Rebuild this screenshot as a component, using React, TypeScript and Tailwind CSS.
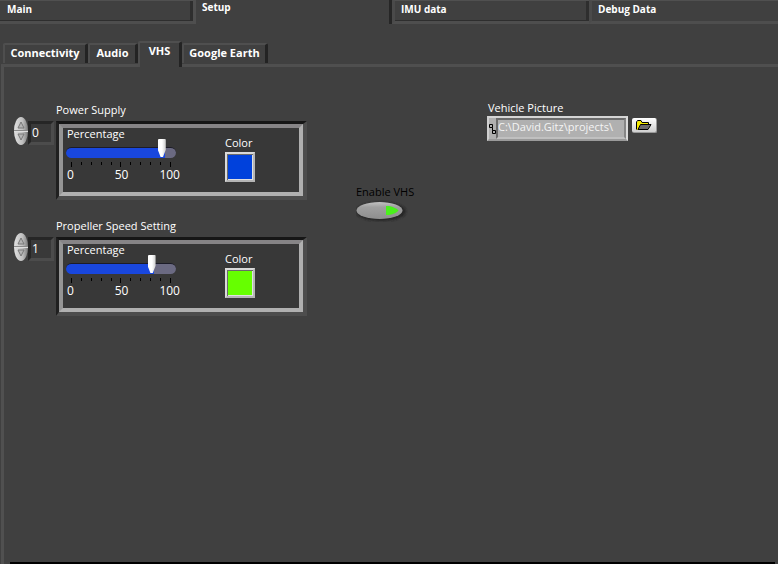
import { useId, useState } from "react";
import type { CSSProperties } from "react";

const MAIN_TABS = [
  { name: "Main", width: "w-[193px]" },
  { name: "Setup", width: "w-[199px]" },
  { name: "IMU data", width: "w-[197px]" },
  { name: "Debug Data", width: "grow" },
];

const SETUP_TABS = [
  { name: "Connectivity", width: "w-[85px]" },
  { name: "Audio", width: "w-[50px]" },
  { name: "VHS", width: "w-[44px]" },
  { name: "Google Earth", width: "w-[86px]" },
];

const TICKS = [0, 1, 2, 3, 4, 5, 6, 7, 8, 9, 10];

function MainTabs() {
  const [active, setActive] = useState("Setup");
  return (
    <nav role="tablist" className="flex h-6">
      {MAIN_TABS.map(({ name, width }) => {
        const on = name === active;
        return (
          <button
            key={name}
            type="button"
            role="tab"
            aria-selected={on}
            onClick={() => setActive(name)}
            className={
              width +
              " flex shrink-0 items-start border-l-[3px] pl-1.5 text-left text-[10px] font-bold last:shadow-none " +
              (on
                ? "border-l-[#4f4f4f] leading-[14px] shadow-[inset_-3px_0_0_#262626]"
                : "border-t border-b-[3px] border-t-[#505050] border-b-[#4e4e4e] border-l-[#4a4a4a] leading-4 shadow-[inset_-3px_-1px_0_#2e2e2e] first:border-l-0 first:pl-[7px]")
            }
          >
            {name}
          </button>
        );
      })}
    </nav>
  );
}

function SetupTabs() {
  const [active, setActive] = useState("VHS");
  return (
    <nav role="tablist" className="relative z-10 -mb-[3px] flex items-start pl-[3px]">
      {SETUP_TABS.map(({ name, width }) => {
        const on = name === active;
        return (
          <button
            key={name}
            type="button"
            role="tab"
            aria-selected={on}
            onClick={() => setActive(name)}
            className={
              width +
              " shrink-0 rounded-t-[2px] border-t-2 border-r-[3px] border-l-2 border-t-[#4f4f4f] border-r-[#232323] border-l-[#4e4e4e] bg-[#404040] text-center text-[11px] leading-4 font-bold whitespace-nowrap " +
              (on ? "h-[26px] pb-2" : "mt-0.5 h-5 pb-0.5")
            }
          >
            {name}
          </button>
        );
      })}
    </nav>
  );
}

function Spinner({ onUp, onDown }: { onUp: () => void; onDown: () => void }) {
  return (
    <div className="relative -mt-1 h-7 w-3.5">
      <svg viewBox="0 0 14 28" className="h-7 w-3.5" aria-hidden="true">
        <defs>
          <linearGradient id="spin" x1="0" x2="1" y1="0" y2="0">
            <stop offset="0" stopColor="#e0e0e0" />
            <stop offset="0.6" stopColor="#c0c0c0" />
            <stop offset="1" stopColor="#7c7c7c" />
          </linearGradient>
        </defs>
        <ellipse cx="7" cy="14" rx="7" ry="14" fill="url(#spin)" />
        <path d="M0 13.5h14" stroke="#888" />
        <path d="M0 14.5h14" stroke="#ddd" />
        <path d="M7 5 L10 11 H4 Z" fill="#b4b4b4" stroke="#777" />
        <path d="M7 23 L10 17 H4 Z" fill="#b4b4b4" stroke="#777" />
      </svg>
      <button type="button" aria-label="Increment" onClick={onUp} className="absolute inset-x-0 top-0 h-3.5" />
      <button type="button" aria-label="Decrement" onClick={onDown} className="absolute inset-x-0 bottom-0 h-3.5" />
    </div>
  );
}

function Cluster({ title, start, level, swatch }: { title: string; start: number; level: number; swatch: string }) {
  const id = useId();
  const [index, setIndex] = useState(start);
  const [value, setValue] = useState(level);
  return (
    <section>
      <label htmlFor={id + "i"} className="ml-[42px] block leading-4">
        {title}
      </label>
      <div className="mt-[3px] flex items-start">
        <Spinner onUp={() => setIndex(index + 1)} onDown={() => setIndex(Math.max(0, index - 1))} />
        <input
          id={id + "i"}
          value={index}
          onChange={(e) => setIndex(Number(e.target.value) || 0)}
          className="mr-0.5 h-6 w-[26px] border-[3px] border-t-[#262626] border-r-[#4c4c4c] border-b-[#4c4c4c] border-l-[#262626] bg-[#393939] pb-0.5 pl-px text-[12px] outline-none"
        />
        <div className="grow border-t-[3px] border-r-4 border-b-4 border-l-[3px] border-t-[#161616] border-r-[#4d4d4d] border-b-[#4d4d4d] border-l-[#202020]">
          <div className="flex h-[72px] gap-[49px] border-4 border-t-[#868486] border-r-[#b0b0b0] border-b-[#b0b0b0] border-l-[#959595] bg-[#383838] pl-[3px]">
            <div className="w-[110px]">
              <label htmlFor={id + "s"} className="block pl-px leading-3">
                Percentage
              </label>
              <input
                id={id + "s"}
                type="range"
                min={0}
                max={100}
                value={value}
                onChange={(e) => setValue(Number(e.target.value))}
                style={{ "--fill": value + "%" } as CSSProperties}
                className="mt-[7px] block h-[11px] w-full appearance-none rounded-full bg-transparent outline-none [&::-webkit-slider-runnable-track]:h-[11px] [&::-webkit-slider-runnable-track]:rounded-full [&::-webkit-slider-runnable-track]:border-t [&::-webkit-slider-runnable-track]:border-[#1c1c28] [&::-webkit-slider-runnable-track]:bg-[linear-gradient(to_right,#1947de_var(--fill),#6b6a82_var(--fill))] [&::-webkit-slider-thumb]:-mt-[9px] [&::-webkit-slider-thumb]:h-[18px] [&::-webkit-slider-thumb]:w-2 [&::-webkit-slider-thumb]:appearance-none [&::-webkit-slider-thumb]:rounded-[1px] [&::-webkit-slider-thumb]:bg-[linear-gradient(to_right,#fff_50%,#c9c9c9)] [&::-webkit-slider-thumb]:[clip-path:polygon(0_0,100%_0,100%_60%,65%_100%,35%_100%,0_60%)]"
              />
              <div className="mx-[5px] mt-1 flex h-[5px] items-start justify-between" aria-hidden="true">
                {TICKS.map((t) => (
                  <span key={t} className={t % 5 === 0 ? "h-[5px] w-px bg-black" : "h-[3px] w-px bg-black"} />
                ))}
              </div>
              <div className="mt-0.5 grid grid-cols-3 pl-px text-[12px] leading-3">
                <span>0</span>
                <span className="text-center">50</span>
                <span className="-mr-1 text-right">100</span>
              </div>
            </div>
            <div className="mt-[7px] flex flex-col items-start">
              <span id={id + "c"} className="leading-4">
                Color
              </span>
              <button
                type="button"
                aria-labelledby={id + "c"}
                className={
                  "mt-px h-[30px] w-[30px] border-2 border-t-[#dadada] border-r-[#b5b5b5] border-b-[#b5b5b5] border-l-[#dadada] shadow-[inset_1px_1px_0_#6a6a6a,inset_-1px_-1px_0_#e0e0e0] " +
                  swatch
                }
              />
            </div>
          </div>
        </div>
      </div>
    </section>
  );
}

function EnableSwitch() {
  const [on, setOn] = useState(true);
  return (
    <div className="mt-[82px] w-[82px] text-black">
      <span id="enable-label" className="block leading-4 whitespace-nowrap">
        Enable VHS
      </span>
      <button
        type="button"
        role="switch"
        aria-checked={on}
        aria-labelledby="enable-label"
        onClick={() => setOn(!on)}
        className="block"
      >
        <svg viewBox="0 0 52 22" className="h-[22px] w-[52px]" aria-hidden="true">
          <defs>
            <linearGradient id="pill" x1="0" x2="0" y1="0" y2="1">
              <stop offset="0" stopColor="#c2c2c2" />
              <stop offset="0.3" stopColor="#a0a0a0" />
              <stop offset="1" stopColor="#8e8e8e" />
            </linearGradient>
            <filter id="soft">
              <feGaussianBlur stdDeviation="1" />
            </filter>
          </defs>
          <ellipse cx="25" cy="11.5" rx="25" ry="9.5" fill="#272727" filter="url(#soft)" />
          <ellipse cx="23.5" cy="10.5" rx="23" ry="8.5" fill="url(#pill)" />
          <path d="M30 6 h3 Q40 7.5 42.5 10.5 Q40 13.5 33 15 h-3 Z" fill={on ? "#4af01c" : "#2d6b1b"} />
        </svg>
      </button>
    </div>
  );
}

function VehiclePicture() {
  const [path, setPath] = useState("C:\\David.Gitz\\projects\\");
  return (
    <div className="-mt-0.5">
      <label htmlFor="vehicle" className="block pl-px leading-4">
        Vehicle Picture
      </label>
      <div className="flex items-start gap-1">
        <div className="flex h-[25px] w-[141px] items-center border-2 border-t-[#d5d5d5] border-r-[#dcdcdc] border-b-[#9a9a9a] border-l-[#d0d0d0] bg-[#b0b0b0]">
          <svg viewBox="0 0 7 11" className="h-[11px] w-[7px] shrink-0" fill="none" stroke="#000" aria-hidden="true">
            <path d="M0.5 1.5h3v3h-3z M3.5 7.5h3v3h-3z M3.5 4.5v3" />
          </svg>
          <input
            id="vehicle"
            value={path}
            onChange={(e) => setPath(e.target.value)}
            className="h-[21px] min-w-0 grow border-2 border-t-[#6b6b6b] border-r-[#868686] border-b-[#c0c0c0] border-l-[#6b6b6b] bg-[#b0b0b0] pb-1 text-[#f4f4f4] outline-none"
          />
        </div>
        <button
          type="button"
          aria-label="Browse"
          className="mt-0.5 flex h-[15px] w-[25px] items-center justify-center rounded-[2px] border-r border-b border-[#9a9a9a] bg-[linear-gradient(#ffffff,#cfcfcf)]"
        >
          <svg viewBox="0 0 16 11" className="h-[11px] w-4" aria-hidden="true">
            <path d="M1 10V2L2 1H5L6 2.5H12V5H4L2 10Z" fill="#f4ea00" />
            <path d="M0.5 9.5V2L1.5 0.5H5L6 2.5H12.5V4.5" fill="none" stroke="#000" />
            <path d="M2 9.5L4.5 4.5H15L12 9.5Z" fill="#6c6a6c" stroke="#000" />
          </svg>
        </button>
      </div>
    </div>
  );
}

export default function App() {
  return (
    <div className="flex min-h-screen flex-col bg-[#404040] font-['Open_Sans','Noto_Sans',sans-serif] text-[11px] text-white">
      <MainTabs />
      <div className="flex grow flex-col pt-[17px]">
        <SetupTabs />
        <main className="ml-px flex grow flex-col border-t-[3px] border-l-[3px] border-t-[#4f4f4f] border-l-[#505050]">
          <div className="flex items-start gap-[49px] pt-[35px] pl-[10px]">
            <div className="flex w-[293px] shrink-0 flex-col gap-[18px]">
              <Cluster title="Power Supply" start={0} level={90} swatch="bg-[#0041dc]" />
              <Cluster title="Propeller Speed Setting" start={1} level={80} swatch="bg-[#66ff00]" />
            </div>
            <EnableSwitch />
            <VehiclePicture />
          </div>
          <div className="mt-auto mr-[3px] ml-1.5 h-0.5 bg-black" />
        </main>
      </div>
    </div>
  );
}
